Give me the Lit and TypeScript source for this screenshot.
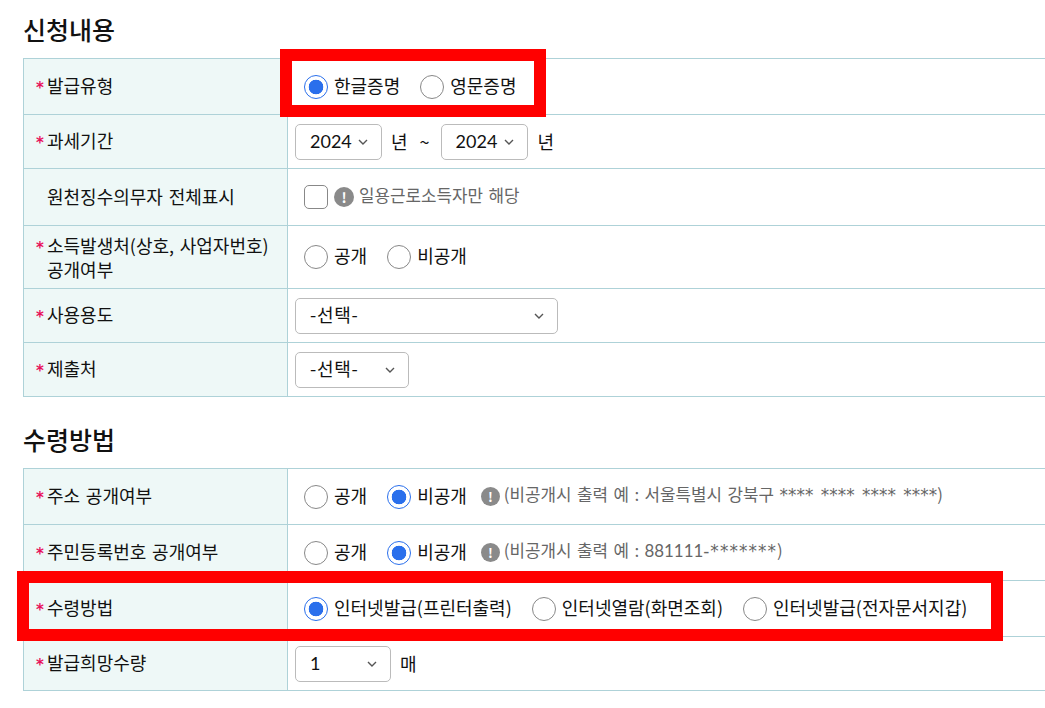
import { LitElement, html, css } from "lit";
import { customElement } from "lit/decorators.js";

const chevron = html`<svg class="chev" viewBox="0 0 10 6" width="10" height="6"><path d="M1 1l4 4 4-4" fill="none" stroke="#555" stroke-width="1.4"/></svg>`;
const info = (cls = "") => html`<span class="info ${cls}">!</span>`;
const radio = (label: string, on = false) => html`<span class="opt"><span class="radio ${on ? "on" : ""}"></span><span class="txt">${label}</span></span>`;
const select = (text: unknown, cls: string) => html`<span class="select ${cls}"><span class="txt">${text}</span>${chevron}</span>`;
const num = (t: string) => html`<span class="num">${t}</span>`;
const ast = (t: string, cls = "") => html`<span class="ast ${cls}">${t}</span>`;
const pick = html`<span class="pick">-선택-</span>`;

type Row = { h: string; req: boolean; label: unknown; body: unknown };

@customElement("app-root")
export class AppRoot extends LitElement {
  static styles = css`
    :host { display: block; position: relative; width: 1045px; height: 708px; overflow: hidden; background: #fff; color: #111; font-family: "Noto Sans CJK KR", sans-serif; font-size: 18px; word-spacing: 1.7px; }
    .num { font-family: Lato, sans-serif; }
    .ast { font-family: "DejaVu Sans", sans-serif; letter-spacing: 0.1px; }
    .ast.wide { letter-spacing: 1.1px; }
    .pick { display: block; letter-spacing: 0.7px; padding-bottom: 2px; }
    .page { padding: 10px 0 0 23px; }
    h2 { margin: 0; height: 48px; font-size: 25px; font-weight: 500; line-height: 38px; color: #111; }
    h2.second { margin-top: 17px; height: 54px; padding-top: 6px; box-sizing: border-box; }
    .table { border-bottom: 1px solid #aed2d8; border-left: 1px solid #aed2d8; }
    .row { display: flex; border-top: 1px solid #aed2d8; box-sizing: border-box; }
    .h54 { height: 54px; } .h56 { height: 56px; } .h57 { height: 57px; } .h63 { height: 63px; }
    .th { width: 264px; flex: none; box-sizing: border-box; background: #eef8f7; border-right: 1px solid #aed2d8; display: flex; align-items: center; padding: 0 0 0 12px; line-height: 26px; }
    .lab { display: flex; align-items: flex-start; }
    .star { width: 11px; flex: none; color: #e8125c; font-family: "DejaVu Sans", sans-serif; font-size: 15px; font-weight: 700; line-height: 26px; padding-top: 3px; }
    .star.off { visibility: hidden; }
    .two { display: block; margin-top: -2px; }
    .td { flex: 1; display: flex; align-items: center; padding-left: 7px; }
    .opts { display: flex; align-items: center; padding-left: 9px; gap: 20px; }
    .opts.tight { gap: 6px; }
    .opt { display: inline-flex; align-items: center; gap: 6px; line-height: 24px; }
    .txt { padding-bottom: 2px; }
    .opt .txt { padding-bottom: 4px; }
    .radio { width: 24px; height: 24px; box-sizing: border-box; border: 1px solid #888; border-radius: 50%; background: #fff; flex: none; }
    .radio.on { border-color: #2a6fec; background: radial-gradient(circle, #2a6fec 0 7px, #fff 7.6px); }
    .check { width: 24px; height: 24px; box-sizing: border-box; border: 1px solid #888; border-radius: 5px; flex: none; }
    .info { width: 20px; height: 20px; border-radius: 50%; background: #8a8a8a; color: #fff; font-size: 14px; font-weight: 700; line-height: 20px; text-align: center; flex: none; }
    .info.small { width: 19px; height: 19px; line-height: 19px; font-size: 13px; }
    .hint { color: #666; font-size: 16.85px; line-height: 24px; display: flex; align-items: center; gap: 5px; }
    .hint > :last-child { padding-bottom: 4px; }
    .hint.close { margin-left: -6px; gap: 4px; }
    .select { height: 36px; box-sizing: border-box; border: 1px solid #bbb; border-radius: 5px; display: inline-flex; align-items: center; justify-content: space-between; padding: 0 13px 0 14px; background: #fff; line-height: 24px; flex: none; }
    .sy { width: 87px; } .sw { width: 263px; } .sm { width: 114px; } .sq { width: 96px; }
    .chev { flex: none; }
    .unit { margin-left: 9px; padding-bottom: 1px; }
    .unit.far { margin-left: 10px; }
    .tilde { margin: 0 11px 0 12px; padding-bottom: 1px; }
    .mark { position: absolute; box-sizing: border-box; border: 12px solid #f00; pointer-events: none; }
    .mark.one { left: 280px; top: 49px; width: 266px; height: 68px; }
    .mark.two { left: 17px; top: 573px; width: 986px; height: 70px; }
  `;

  private table(rows: Row[]) {
    return html`<div class="table">${rows.map((r) => html`
      <div class="row ${r.h}">
        <div class="th"><div class="lab"><span class="star ${r.req ? "" : "off"}">*</span><span>${r.label}</span></div></div>
        <div class="td">${r.body}</div>
      </div>`)}</div>`;
  }

  render() {
    const first: Row[] = [
      { h: "h56", req: true, label: "발급유형", body: html`<div class="opts">${radio("한글증명", true)}${radio("영문증명")}</div>` },
      { h: "h54", req: true, label: "과세기간", body: html`${select(num("2024"), "sy")}<span class="unit">년</span><span class="tilde">~</span>${select(num("2024"), "sy")}<span class="unit far">년</span>` },
      { h: "h57", req: false, label: "원천징수의무자 전체표시", body: html`<div class="opts tight"><span class="check"></span><span class="hint">${info()}<span>일용근로소득자만 해당</span></span></div>` },
      { h: "h63", req: true, label: html`소득발생처(상호, 사업자번호)<span class="two">공개여부</span>`, body: html`<div class="opts">${radio("공개")}${radio("비공개")}</div>` },
      { h: "h54", req: true, label: "사용용도", body: select(pick, "sw") },
      { h: "h54", req: true, label: "제출처", body: select(pick, "sm") },
    ];
    const second: Row[] = [
      { h: "h56", req: true, label: "주소 공개여부", body: html`<div class="opts">${radio("공개")}${radio("비공개", true)}<span class="hint close">${info("small")}<span>(비공개시 출력 예 : 서울특별시 강북구 ${ast("**** **** **** ****")})</span></span></div>` },
      { h: "h56", req: true, label: "주민등록번호 공개여부", body: html`<div class="opts">${radio("공개")}${radio("비공개", true)}<span class="hint close">${info("small")}<span>(비공개시 출력 예 : ${num("881111")}${ast("-*******", "wide")})</span></span></div>` },
      { h: "h56", req: true, label: "수령방법", body: html`<div class="opts">${radio("인터넷발급(프린터출력)", true)}${radio("인터넷열람(화면조회)")}${radio("인터넷발급(전자문서지갑)")}</div>` },
      { h: "h54", req: true, label: "발급희망수량", body: html`${select(num("1"), "sq")}<span class="unit">매</span>` },
    ];
    return html`
      <div class="page">
        <h2>신청내용</h2>
        ${this.table(first)}
        <h2 class="second">수령방법</h2>
        ${this.table(second)}
      </div>
      <div class="mark one"></div>
      <div class="mark two"></div>
    `;
  }
}
